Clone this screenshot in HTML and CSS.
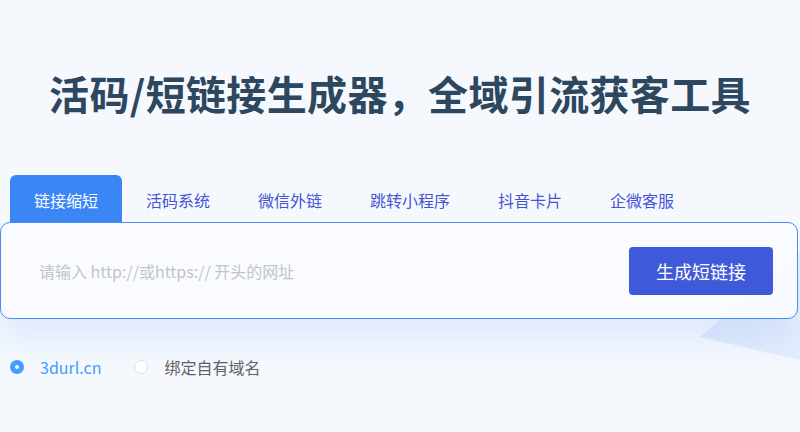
FILE: index.html
```html
<!DOCTYPE html>
<html lang="zh-CN">
<head>
    <meta charset="UTF-8">
    <meta name="viewport" content="width=device-width, initial-scale=1.0">
    <title>短链接生成器</title>
    <link rel="stylesheet" href="styles.css">
</head>
<body>
    <svg class="deco" width="120" height="130" viewBox="0 0 120 130">
        <defs>
            <linearGradient id="decoFill" x1="0" y1="1" x2="1" y2="0">
                <stop offset="0" stop-color="#dde8fb"/>
                <stop offset="1" stop-color="#ecf2fd"/>
            </linearGradient>
        </defs>
        <polygon points="20,87 120,0 120,110" fill="url(#decoFill)"/>
    </svg>

    <h1 class="title">活码/短链接生成器，全域引流获客工具</h1>

    <div class="main">
        <ul class="tabs">
            <li class="tab active">链接缩短</li>
            <li class="tab">活码系统</li>
            <li class="tab">微信外链</li>
            <li class="tab">跳转小程序</li>
            <li class="tab">抖音卡片</li>
            <li class="tab">企微客服</li>
        </ul>

        <div class="box">
            <input class="url-input" type="text" placeholder="请输入 http://或https:// 开头的网址">
            <button class="btn">生成短链接</button>
        </div>

        <div class="domains">
            <label class="radio checked"><span class="dot"></span>3durl.cn</label>
            <label class="radio"><span class="dot"></span>绑定自有域名</label>
        </div>
    </div>
</body>
</html>
```

FILE: styles.css
```css
body {
    font-family: "Noto Sans CJK SC", "Noto Sans", sans-serif;
    margin: 0;
    padding: 0;
    background-color: #f5f9fe;
    position: relative;
    height: 432px;
    overflow: hidden;
}
.deco {
    position: absolute;
    right: 0;
    top: 250px;
}
.title {
    margin: 0;
    padding-top: 65px;
    line-height: 56px;
    font-size: 40px;
    font-weight: bold;
    color: #2d475e;
    text-align: center;
    letter-spacing: 0.35px;
}
.main {
    margin-top: 54px;
    margin-right: 2px;
    position: relative;
}
.tabs {
    list-style: none;
    margin: 0 0 0 10px;
    padding: 0;
    display: flex;
}
.tab {
    padding: 0 24px;
    height: 47px;
    line-height: 50px;
    text-align: center;
    font-size: 16px;
    color: #4753d4;
    border-radius: 6px 6px 0 0;
}
.tab.active {
    background-color: #3b86f5;
    color: white;
}
.box {
    height: 95px;
    border: 1px solid #4a8af4;
    border-radius: 10px;
    background-color: rgba(250, 252, 255, 0.85);
    display: flex;
    align-items: center;
    padding: 0 24px 0 38px;
    box-shadow: 0 22px 30px rgba(70, 130, 235, 0.12);
}
.url-input {
    flex: 1;
    border: none;
    background: transparent;
    font-family: inherit;
    font-size: 16px;
    color: #333;
    outline: none;
    padding: 0;
}
.url-input::placeholder {
    color: #c0c4cc;
}
.btn {
    width: 144px;
    height: 48px;
    background-color: #3f5ad9;
    color: white;
    border: none;
    border-radius: 4px;
    font-family: inherit;
    font-size: 18px;
}
.domains {
    display: flex;
    align-items: center;
    margin-top: 36px;
    padding-left: 10px;
}
.radio {
    display: flex;
    align-items: center;
    font-size: 16px;
    color: #606266;
    margin-right: 33px;
}
.radio .dot {
    width: 12px;
    height: 12px;
    border: 1px solid #dcdfe6;
    border-radius: 50%;
    background: white;
    margin-right: 16px;
    box-sizing: content-box;
}
.radio.checked {
    color: #409eff;
}
.radio.checked .dot {
    width: 4px;
    height: 4px;
    border: 5px solid #409eff;
    background: white;
}
```
